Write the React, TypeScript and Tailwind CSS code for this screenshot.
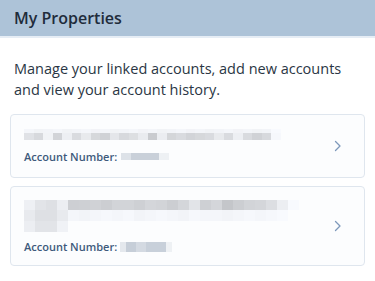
import React from "react";

const g = (v: number) => `rgb(${v},${v + 2},${v + 6})`;

function PixelRow({ cells, h, cw }: { cells: number[]; h: number; cw: number }) {
  return (
    <div className="flex">
      {cells.map((v, i) => (
        <div key={i} style={{ width: cw, height: h, background: v >= 252 ? "transparent" : g(v) }} />
      ))}
    </div>
  );
}

const c1a = [244, 240, 242, 244, 240, 242, 244, 241, 243, 240, 242, 244, 241, 243, 240, 242, 244, 241, 243, 240, 242, 244, 241, 243, 240, 242, 248];
const c1b = [222, 212, 240, 206, 236, 214, 230, 210, 204, 226, 212, 218, 232, 196, 234, 208, 214, 206, 210, 214, 230, 214, 236, 214, 204, 212, 246];

const c2a = [238, 226, 222, 236, 205, 206, 208, 204, 210, 210, 206, 212, 210, 204, 212, 226, 206, 212, 196, 204, 210, 212, 220, 236, 248];
const c2b = [232, 222, 222, 232, 244, 242, 244, 246, 244, 246, 242, 244, 246, 244, 242, 246, 244, 244, 242, 244, 246, 244, 246, 248, 252];
const c2c = [236, 226, 226, 240];

function Chevron() {
  return (
    <svg width="8" height="12" viewBox="0 0 8 12" fill="none">
      <path d="M1.5 1.5 L6 6 L1.5 10.5" stroke="#7d98bb" strokeWidth="1.3" strokeLinecap="round" strokeLinejoin="round" />
    </svg>
  );
}

export default function App() {
  return (
    <div className="w-[375px] h-[281px] bg-white overflow-hidden" style={{ fontFamily: '"Open Sans", sans-serif' }}>
      <div className="h-[36px] bg-[#adc3d8] flex items-center px-[14px] border-b-2 border-[#e6edf5] box-content">
        <h1 className="text-[16px] font-semibold text-[#1f2c3b] leading-none">My Properties</h1>
      </div>
      <div className="px-[10px]">
        <p className="px-[4px] pt-[20px] text-[14.5px] leading-[21px] text-[#2a3644]">
          Manage your linked accounts, add new accounts and view your account history.
        </p>
        <div className="mt-[14px] flex flex-col gap-[8px]">
          <div className="h-[64px] rounded-[4px] border border-[#dfe6ee] bg-[#fcfdfe] flex items-center pl-[13px] pr-[22px]">
            <div className="flex-1 flex flex-col">
              <div className="opacity-90">
                <PixelRow cells={c1a} h={4} cw={9.5} />
                <PixelRow cells={c1b} h={7} cw={9.5} />
              </div>
              <div className="mt-[10px] flex items-center gap-[4px]">
                <span className="text-[11px] font-semibold text-[#3e5a7c] leading-[14px]">Account Number:</span>
                <div className="flex">
                  <div className="w-[10px] h-[7px] bg-[#dde2e8]" />
                  <div className="w-[28px] h-[7px] bg-[#c9d0d9]" />
                  <div className="w-[10px] h-[7px] bg-[#eef1f4]" />
                </div>
              </div>
            </div>
            <Chevron />
          </div>
          <div className="h-[80px] rounded-[4px] border border-[#dfe6ee] bg-[#fcfdfe] flex items-center pl-[13px] pr-[22px]">
            <div className="flex-1 flex flex-col">
              <div className="pt-[2px]">
                <PixelRow cells={c2a} h={10} cw={11} />
                <PixelRow cells={c2b} h={11} cw={11} />
                <PixelRow cells={c2c} h={11} cw={11} />
              </div>
              <div className="mt-[8px] flex items-center gap-[3px]">
                <span className="text-[11px] font-semibold text-[#3e5a7c] leading-[14px]">Account Number:</span>
                <div className="flex">
                  <div className="w-[6px] h-[10px] bg-[#e4e8ed]" />
                  <div className="w-[10px] h-[10px] bg-[#c6ced8]" />
                  <div className="w-[10px] h-[10px] bg-[#d4dae2]" />
                  <div className="w-[20px] h-[10px] bg-[#c8d0da]" />
                  <div className="w-[6px] h-[10px] bg-[#eef1f4]" />
                </div>
              </div>
            </div>
            <Chevron />
          </div>
        </div>
      </div>
    </div>
  );
}
